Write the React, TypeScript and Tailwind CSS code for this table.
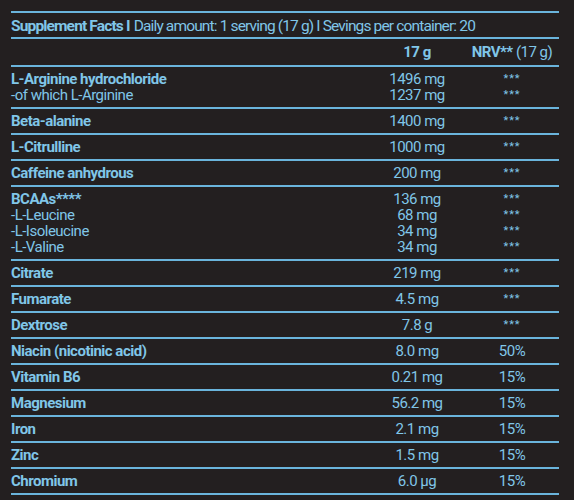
const font = { fontFamily: 'Roboto, "Liberation Sans", sans-serif' };

type Row = {
  name: string;
  sub?: { name: string; amount: string; nrv: string }[];
  amount: string;
  nrv: string;
};

const rows: Row[] = [
  { name: "L-Arginine hydrochloride", amount: "1496 mg", nrv: "***", sub: [{ name: "-of which L-Arginine", amount: "1237 mg", nrv: "***" }] },
  { name: "Beta-alanine", amount: "1400 mg", nrv: "***" },
  { name: "L-Citrulline", amount: "1000 mg", nrv: "***" },
  { name: "Caffeine anhydrous", amount: "200 mg", nrv: "***" },
  {
    name: "BCAAs****",
    amount: "136 mg",
    nrv: "***",
    sub: [
      { name: "-L-Leucine", amount: "68 mg", nrv: "***" },
      { name: "-L-Isoleucine", amount: "34 mg", nrv: "***" },
      { name: "-L-Valine", amount: "34 mg", nrv: "***" },
    ],
  },
  { name: "Citrate", amount: "219 mg", nrv: "***" },
  { name: "Fumarate", amount: "4.5 mg", nrv: "***" },
  { name: "Dextrose", amount: "7.8 g", nrv: "***" },
  { name: "Niacin (nicotinic acid)", amount: "8.0 mg", nrv: "50%" },
  { name: "Vitamin B6", amount: "0.21 mg", nrv: "15%" },
  { name: "Magnesium", amount: "56.2 mg", nrv: "15%" },
  { name: "Iron", amount: "2.1 mg", nrv: "15%" },
  { name: "Zinc", amount: "1.5 mg", nrv: "15%" },
  { name: "Chromium", amount: "6.0 µg", nrv: "15%" },
];

function Stars({ v }: { v: string }) {
  // the *** cells sit higher and smaller than the percentages
  if (v === "***") return <span className="text-[11px] leading-[16px] tracking-[1px] align-top">***</span>;
  return <span>{v}</span>;
}

export default function App() {
  return (
    <div className="w-[574px] h-[500px] bg-[#231f20] text-[#80c6e8] overflow-hidden pt-[11px] px-[11px]" style={font}>
      <div className="w-[548px] border-b-2 border-[#6ab4dc]">
        <div className="border-t-2 border-[#6ab4dc] h-[26px] flex items-center pt-[2px] whitespace-nowrap text-[15.5px] leading-[18px] tracking-[-0.85px]">
          <span className="font-bold">Supplement Facts I</span>
          <span className="ml-[4px]">Daily amount: 1 serving (17 g) I Sevings per container: 20</span>
        </div>

        <div className="border-t-2 border-[#6ab4dc] h-[28px] grid grid-cols-[358px_96px_94px] items-center text-[15px] leading-[16px] tracking-[-0.5px]">
          <div />
          <div className="text-center font-bold">17 g</div>
          <div className="text-center">
            <span className="font-bold">NRV**</span> (17 g)
          </div>
        </div>

        {rows.map((r) => (
          <div key={r.name} className="border-t-2 border-[#6ab4dc] py-[4px] text-[15px] leading-[16px] tracking-[-0.5px]">
            <div className="grid grid-cols-[358px_96px_94px]">
              <div className="font-bold">{r.name}</div>
              <div className="text-center">{r.amount}</div>
              <div className="text-center">
                <Stars v={r.nrv} />
              </div>
            </div>
            {r.sub?.map((s) => (
              <div key={s.name} className="grid grid-cols-[358px_96px_94px]">
                <div>{s.name}</div>
                <div className="text-center">{s.amount}</div>
                <div className="text-center">
                  <Stars v={s.nrv} />
                </div>
              </div>
            ))}
          </div>
        ))}
      </div>
    </div>
  );
}
